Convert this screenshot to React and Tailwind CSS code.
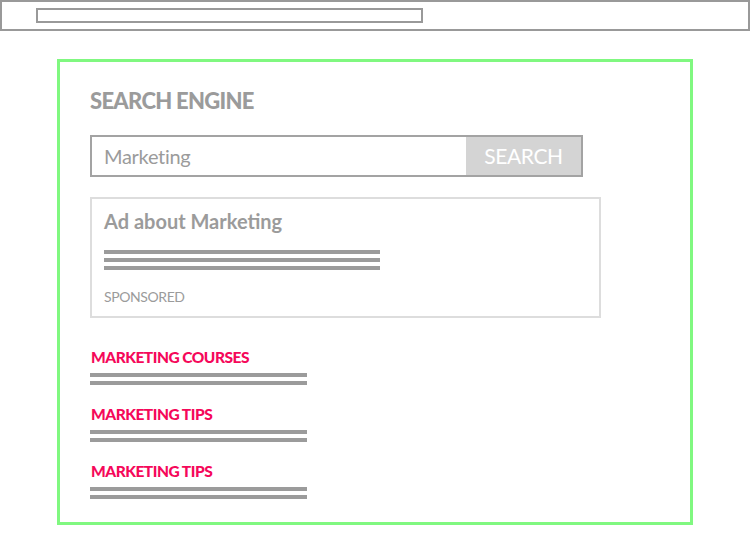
import React from 'react';

const font = { fontFamily: 'Lato, "Liberation Sans", sans-serif' };

function Lines({ count, width }) {
  return (
    <div className="flex flex-col gap-[4px]">
      {Array.from({ length: count }).map((_, i) => (
        <div key={i} className={`h-[4px] bg-[#9b9b9b] ${width}`} />
      ))}
    </div>
  );
}

function Result({ title }) {
  return (
    <div className="flex flex-col">
      <div className="pl-px text-[15.5px] font-black leading-[20px] text-[#f5085a] tracking-[-0.5px]">{title}</div>
      <div className="mt-[6px]">
        <Lines count={2} width="w-[217px]" />
      </div>
    </div>
  );
}

export default function App() {
  return (
    <div className="w-[750px] h-[550px] bg-white" style={font}>
      {/* Browser bar */}
      <div className="h-[31px] border-2 border-[#999999] pl-[34px] pt-[6px]">
        <div className="w-[387px] h-[15px] border-2 border-[#999999]" />
      </div>

      {/* Page frame */}
      <div className="mt-[28px] ml-[57px] w-[636px] h-[466px] border-[3px] border-[#80f880] pl-[30px] pt-[25px]">
        <h1 className="text-[22px] font-black leading-[28px] text-[#9b9b9b] tracking-[-0.7px]">SEARCH ENGINE</h1>

        <div className="mt-[20px] flex w-[493px] h-[42px] border-2 border-[#a3a3a3]">
          <div className="flex-1 flex items-center pl-[12px] text-[20px] text-[#9b9b9b] tracking-[-0.3px]">Marketing</div>
          <div className="w-[115px] bg-[#d4d4d4] flex items-center justify-center text-[21px] text-white tracking-[-0.4px]">
            SEARCH
          </div>
        </div>

        <div className="mt-[20px] w-[511px] h-[121px] border-2 border-[#dddddd] pl-[12px] pt-[10px]">
          <div className="text-[20px] font-bold leading-[24px] text-[#9b9b9b]">Ad about Marketing</div>
          <div className="mt-[17px]">
            <Lines count={3} width="w-[276px]" />
          </div>
          <div className="mt-[18px] text-[14px] leading-[18px] text-[#9b9b9b] tracking-[-0.4px]">SPONSORED</div>
        </div>

        <div className="mt-[29px] flex flex-col gap-[19px]">
          <Result title="MARKETING COURSES" />
          <Result title="MARKETING TIPS" />
          <Result title="MARKETING TIPS" />
        </div>
      </div>
    </div>
  );
}
